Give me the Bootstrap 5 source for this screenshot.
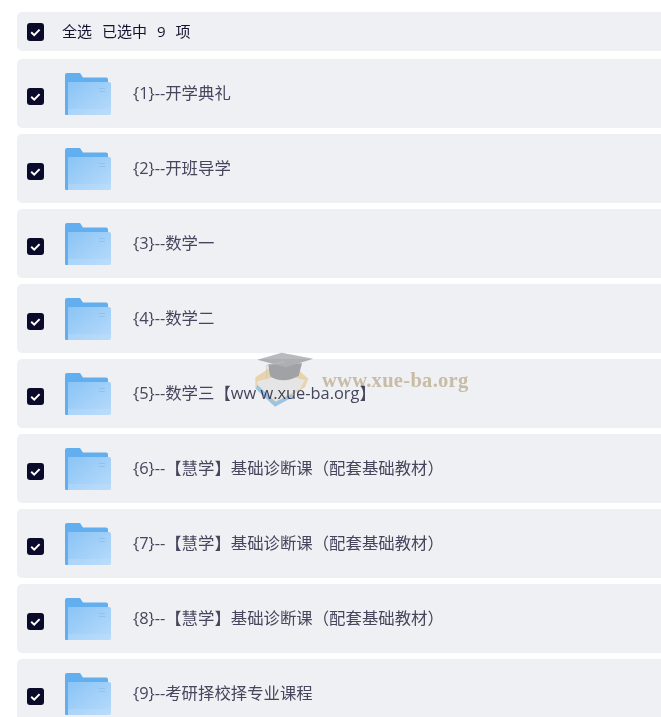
<!DOCTYPE html>
<html lang="zh-CN">
<head>
    <meta charset="UTF-8">
    <meta name="viewport" content="width=device-width, initial-scale=1.0">
    <title>文件列表</title>
    <link href="https://cdn.jsdelivr.net/npm/bootstrap@5.3.0/dist/css/bootstrap.min.css" rel="stylesheet">
    <style>
        html, body {
            height: 717px;
            overflow: hidden;
        }
        body {
            background-color: #fff;
            font-family: "Open Sans", "Noto Sans CJK SC", sans-serif;
        }
        .file-list {
            padding: 12px 0 0 17px;
            width: 680px;
        }
        .file-row {
            background-color: #eff0f3;
            border-radius: 5px;
            height: 69px;
            margin-bottom: 6px;
            padding-left: 10px;
            color: #45455c;
            font-size: 16.4px;
        }
        .file-head {
            height: 39px;
            margin-bottom: 8px;
            color: #12122e;
            font-size: 15px;
        }
        .tick-box {
            width: 17px;
            height: 17px;
            background-color: #0a0a2a;
            border-radius: 3px;
            flex: none;
        }
        .file-row .tick-box {
            margin-top: 6px;
        }
        .file-head .tick-box {
            height: 18px;
            margin-top: 1px;
        }
        .head-text {
            margin-left: 18px;
            gap: 10px;
        }
        .folder-icon {
            width: 46px;
            height: 42px;
            margin-left: 21px;
            margin-top: 1px;
            flex: none;
        }
        .file-name {
            margin-left: 22px;
            white-space: nowrap;
        }
        .school-mark {
            position: absolute;
            left: 250px;
            top: 348px;
            mix-blend-mode: multiply;
            pointer-events: none;
        }
        .school-text {
            position: absolute;
            left: 322px;
            top: 365px;
            font-family: "Liberation Serif", serif;
            font-weight: 700;
            font-size: 20.5px;
            letter-spacing: .3px;
            color: #d6c8ae;
            mix-blend-mode: multiply;
        }
    </style>
</head>
<body>
    <svg width="0" height="0" class="position-absolute">
        <defs>
            <linearGradient id="folderFront" x1="0" y1="0" x2="1" y2="1">
                <stop offset="0" stop-color="#8ac4f5"/>
                <stop offset="1" stop-color="#b8dbfb"/>
            </linearGradient>
            <symbol id="folder" viewBox="0 0 46 42">
                <path d="M0 2a2 2 0 0 1 2-2h13l3 4.500h23a2 2 0 0 1 2 2V42H1a1 1 0 0 1-1-1z" fill="#62aeee"/>
                <path d="M3 9h41a2 2 0 0 1 2 2v29a2 2 0 0 1-2 2H3z" fill="url(#folderFront)"/>
                <rect x="3" y="36" width="43" height="6" fill="#c3e1fc" opacity=".3"/>
                <rect x="34" y="15" width="6" height="1" fill="#8fc2ee"/>
                <rect x="34" y="18" width="6" height="1" fill="#8fc2ee"/>
            </symbol>
            <symbol id="tick" viewBox="0 0 17 17">
                <path d="M4.2 8.800l3 2.900 5.400-5.600" fill="none" stroke="#fff" stroke-width="2"/>
            </symbol>
        </defs>
    </svg>

    <div class="file-list" id="fileList">
        <div class="file-row file-head d-flex align-items-center">
            <div class="tick-box"><svg width="17" height="18" class="d-block"><use href="#tick"/></svg></div>
            <div class="head-text d-flex"><span>全选</span><span>已选中</span><span>9</span><span>项</span></div>
        </div>
    </div>

    <svg class="school-mark" width="70" height="64" viewBox="0 0 210 192">
        <path d="M55 62L16 88V122L70 172L165 118L175 92L150 70z" fill="#f8e2b4"/>
        <path d="M22 100L100 80L165 96L150 122L78 160L22 118z" fill="#f4f4f0"/>
        <path d="M18 122L75 176L130 146L128 138L76 162L22 110z" fill="#a5cfee"/>
        <path d="M55 48Q58 82 62 86Q100 108 146 84L156 46z" fill="#acacae"/>
        <path d="M22 35L95 14L190 32L108 58z" fill="#bababc"/>
        <path d="M102 42L50 52V92" fill="none" stroke="#d3cfc4" stroke-width="2"/>
    </svg>
    <div class="school-text">www.xue-ba.org</div>

    <script>
        // Course folders shown in the list
        const names = [
            '{1}--开学典礼',
            '{2}--开班导学',
            '{3}--数学一',
            '{4}--数学二',
            '{5}--数学三【ww w.xue-ba.org】',
            '{6}--【慧学】基础诊断课（配套基础教材）',
            '{7}--【慧学】基础诊断课（配套基础教材）',
            '{8}--【慧学】基础诊断课（配套基础教材）',
            '{9}--考研择校择专业课程'
        ];
        const list = document.getElementById('fileList');
        names.forEach((name) => {
            const row = document.createElement('div');
            row.className = 'file-row d-flex align-items-center';
            row.innerHTML = '<div class="tick-box"><svg width="17" height="17" class="d-block"><use href="#tick"/></svg></div>' +
                '<svg class="folder-icon"><use href="#folder"/></svg>' +
                '<span class="file-name"></span>';
            row.querySelector('.file-name').textContent = name;
            list.appendChild(row);
        });
    </script>
    <script src="https://cdn.jsdelivr.net/npm/bootstrap@5.3.0/dist/js/bootstrap.bundle.min.js"></script>
</body>
</html>
